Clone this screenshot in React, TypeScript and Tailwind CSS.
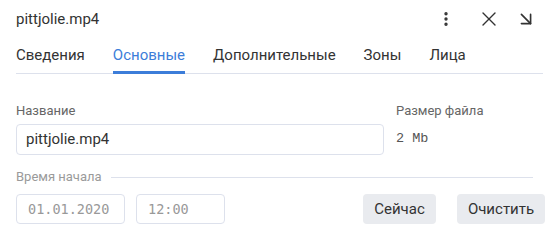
import { EllipsisVertical, X, ArrowDownRight } from 'lucide-react';

const tabs = ['Сведения', 'Основные', 'Дополнительные', 'Зоны', 'Лица'];

export default function App() {
  const active = 'Основные';

  return (
    <div className="w-[559px] h-[247px] bg-white text-[#333] font-['Roboto','Noto_Sans',sans-serif]">
      {/* Header */}
      <div className="flex items-center h-[38px] pl-4 pr-[22px]">
        <h1 className="text-[15px] leading-none pt-[1px]">pittjolie.mp4</h1>
        <div className="ml-auto flex items-center">
          <EllipsisVertical className="h-[18px] w-[18px] text-[#333]" strokeWidth={2.5} />
          <X className="h-[24px] w-[24px] ml-[22px] text-[#333]" strokeWidth={1.4} />
          <ArrowDownRight className="h-[22px] w-[22px] ml-[14px] text-[#333]" strokeWidth={1.8} />
        </div>
      </div>

      {/* Tabs */}
      <div className="mx-4 mt-[3px] flex gap-[28px] border-b border-[#dde1ec]">
        {tabs.map((t) => (
          <div
            key={t}
            className={`pt-[4px] pb-[6px] text-[15px] leading-[20px] border-b-[3px] -mb-[1px] ${
              t === active ? 'text-[#3c7dd9] border-[#3c7dd9]' : 'border-transparent'
            }`}
          >
            {t}
          </div>
        ))}
      </div>

      {/* Name + size */}
      <div className="flex px-4 mt-[29px]">
        <div className="w-[368px]">
          <p className="text-[13px] text-[#666] leading-[16px]">Название</p>
          <div className="mt-[5px] h-[31px] rounded-[4px] border border-[#dde1ec] flex items-center px-[9px] text-[15px]">
            pittjolie.mp4
          </div>
        </div>
        <div className="ml-[12px]">
          <p className="text-[13px] text-[#666] leading-[16px]">Размер файла</p>
          <p className="mt-[5px] h-[31px] flex items-center font-['Liberation_Mono',monospace] text-[13.5px] text-[#555]">
            2 Mb
          </p>
        </div>
      </div>

      {/* Start time */}
      <div className="px-4 mt-[14px]">
        <div className="flex items-center gap-[9px] mr-[10px]">
          <span className="text-[13px] text-[#9a9a9a] leading-[16px]">Время начала</span>
          <div className="flex-1 h-px bg-[#dde1ec]" />
        </div>
        <div className="flex items-center mt-[9px]">
          <div className="w-[109px] h-[30px] rounded-[4px] border border-[#dde1ec] flex items-center px-[11px] font-['DejaVu_Sans_Mono',monospace] text-[13.5px] text-[#999]">
            01.01.2020
          </div>
          <div className="ml-[11px] w-[89px] h-[30px] rounded-[4px] border border-[#dde1ec] flex items-center px-[11px] font-['DejaVu_Sans_Mono',monospace] text-[13.5px] text-[#999]">
            12:00
          </div>
          <button className="ml-auto w-[73px] h-[30px] flex items-center justify-center rounded-[4px] bg-[#e9ebef] text-[15px] text-[#333]">
            Сейчас
          </button>
          <button className="ml-[21px] -mr-[2px] w-[88px] h-[30px] flex items-center justify-center rounded-[4px] bg-[#e9ebef] text-[15px] text-[#333]">
            Очистить
          </button>
        </div>
      </div>
    </div>
  );
}
